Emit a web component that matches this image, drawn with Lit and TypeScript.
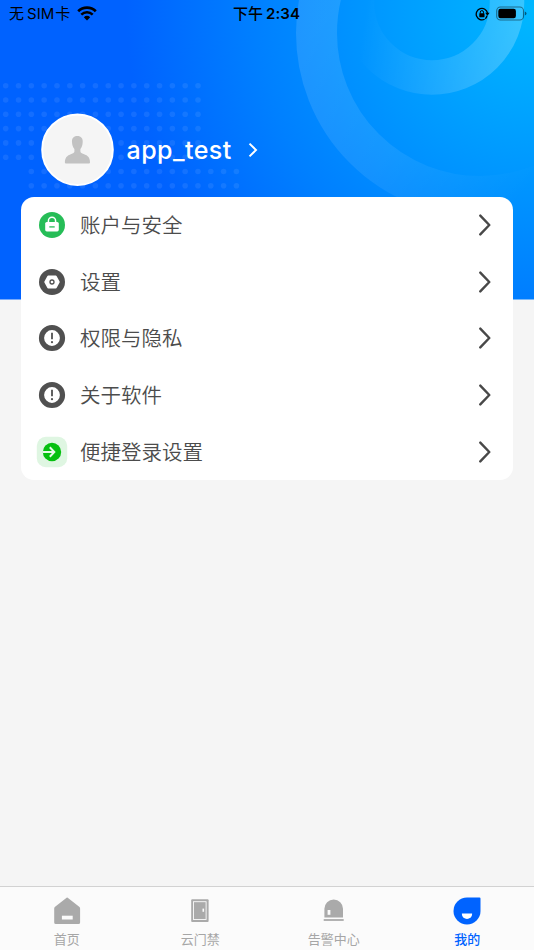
import { LitElement, html, svg, css } from "lit";
import { customElement } from "lit/decorators.js";

const dotRows = [
  ...[0, 1, 2, 3, 4, 5].map((r) => ({ x: 5.7, y: 85.7 + r * 14.3, n: 16 })),
  ...[6, 7].map((r) => ({ x: 31.3, y: 85.7 + r * 14.3, n: 17 })),
];

const exclaim = svg`<circle cx="16" cy="16" r="10.5" fill="#fff" stroke="#505050" stroke-width="5.2"/>
  <path d="M16 10.8v6.4" stroke="#505050" stroke-width="1.8"/><circle cx="16" cy="20.2" r="1.1" fill="#505050"/>`;

const rows = [
  {
    label: "账户与安全",
    icon: svg`<circle cx="16" cy="16" r="13" fill="#26bd57"/>
      <path d="M12.4 13.500v-1.600a3.600 3.600 0 0 1 7.200 0v1.600" fill="none" stroke="#fff" stroke-width="1.500"/>
      <rect x="9.2" y="13" width="13.6" height="9.4" rx="1.6" fill="#fff"/>
      <path d="M13.300 17.900h5.400" stroke="#26bd57" stroke-width="1.300"/>`,
  },
  {
    label: "设置",
    icon: svg`<circle cx="16" cy="16" r="13" fill="#505050"/>
      <path d="M12.2 10.4h7.6L22.800 16l-3 5.600h-7.600L9.200 16z" fill="#fff" stroke="#fff" stroke-width="1.8" stroke-linejoin="round"/>
      <circle cx="16" cy="16" r="2" fill="none" stroke="#505050" stroke-width="1.3"/>`,
  },
  { label: "权限与隐私", icon: exclaim },
  { label: "关于软件", icon: exclaim },
  {
    label: "便捷登录设置",
    icon: svg`<rect x="0.8" y="0.8" width="30.4" height="30.4" rx="9" fill="#dff6e2"/>
      <circle cx="16" cy="16" r="9.2" fill="#06c010"/>
      <path d="M6.800 16h11M13.800 11.200l4.500 4.800-4.500 4.800" fill="none" stroke="#e8fae9" stroke-width="2"/>`,
  },
];

const tabs = [
  {
    label: "首页",
    icon: svg`<path d="M15.700 1.800 27.200 10.800q.9.700.9 1.800V26.500q0 1.600-1.600 1.600H3.800q-1.600 0-1.600-1.600V12.600q0-1.100.9-1.800L14.600 1.800q.550-.4 1.100 0z" fill="#aaa"/>
      <rect x="9.900" y="19.700" width="10.800" height="3.800" fill="#fbfbfb"/>`,
  },
  {
    label: "云门禁",
    icon: svg`<rect x="6.200" y="3.200" width="17.400" height="22.800" rx="1" fill="#aaa"/>
      <rect x="8.500" y="5.700" width="12.600" height="17.800" fill="none" stroke="#fbfbfb" stroke-width="0.900"/>
      <rect x="17.500" y="12.600" width="1.600" height="3.200" fill="#fbfbfb"/>`,
  },
  {
    label: "告警中心",
    icon: svg`<path d="M5.400 21.400V12.800a9.300 9.300 0 0 1 18.600 0v8.600z" fill="#aaa"/>
      <path d="M4.700 24h20" stroke="#aaa" stroke-width="1.800"/>
      <rect x="8.600" y="14" width="2.800" height="4.800" fill="#fbfbfb"/>`,
  },
  {
    label: "我的",
    active: true,
    icon: svg`<path d="M15 1.500H27.500q1 0 1 1V15a13.500 13.500 0 1 1-13.500-13.500z" fill="#0063ff"/>
      <path d="M9.900 17.600h10.200v.4a5.100 4.900 0 0 1-10.200 0z" fill="#fff"/>`,
  },
];

@customElement("app-root")
export class AppRoot extends LitElement {
  static styles = css`
    :host {
      display: flex;
      flex-direction: column;
      position: relative;
      height: 950px;
      background: #f5f5f5;
      font-family: "Inter", "Noto Sans CJK SC", sans-serif;
      overflow: hidden;
    }
    svg { display: block; flex: none; }
    .backdrop { position: absolute; top: 0; left: 0; }
    .status, .profile, .card, .tabs { position: relative; }
    .status {
      height: 28px;
      display: grid;
      grid-template-columns: 1fr auto 1fr;
      align-items: center;
      padding: 0 7px 0 9px;
      box-sizing: border-box;
      font-size: 15px;
      line-height: 28px;
      color: #000;
      white-space: nowrap;
    }
    .carrier { display: flex; align-items: center; gap: 2px; }
    .carrier span:nth-child(2) { margin: 0 -1px 0 1px; }
    .carrier svg { margin: -2px 0 0 5px; }
    .clock { display: flex; gap: 3px; font-weight: 500; margin-right: 3px; }
    .clock b { font-weight: 600; letter-spacing: 0.1px; }
    .power { display: flex; align-items: center; justify-content: flex-end; gap: 6px; }
    .power svg:last-child { margin-top: -2px; }
    .profile {
      height: 73px;
      margin-top: 85px;
      padding-left: 41px;
      display: flex;
      align-items: center;
    }
    .name {
      margin-left: 12.500px;
      width: 105px;
      font-size: 25px;
      line-height: 32px;
      font-weight: 500;
      letter-spacing: 0.450px;
      color: #fff;
      white-space: nowrap;
      padding-top: 1px;
    }
    .more { margin-left: 16.500px; }
    .card {
      margin: 10.500px 21px 0;
      height: 283.500px;
      border-radius: 13px;
      background: #fff;
    }
    .row {
      height: 56.750px;
      display: flex;
      align-items: center;
      padding: 0 21px 0 15px;
    }
    .label {
      flex: 1;
      margin: 0 0 2px 12px;
      font-family: "Noto Sans CJK SC", sans-serif;
      font-weight: 350;
      font-size: 20.500px;
      line-height: 30px;
      color: #4c4c4c;
    }
    .tabs {
      margin-top: auto;
      height: 64px;
      box-sizing: border-box;
      border-top: 1px solid #d2d2d2;
      background: #fbfbfb;
      display: grid;
      grid-template-columns: repeat(4, 1fr);
    }
    .tab {
      display: flex;
      flex-direction: column;
      align-items: center;
      padding-top: 9px;
      font-size: 13px;
      line-height: 18px;
      color: #a6a6a6;
      font-family: "Noto Sans CJK SC", sans-serif;
    }
    .tab span { margin-top: 4px; }
    .active { color: #0063ff; font-weight: 500; }
  `;

  render() {
    return html`
      <svg class="backdrop" width="534" height="300" viewBox="0 0 534 300">
        <defs>
          <radialGradient id="sky" gradientUnits="userSpaceOnUse" cx="534" cy="10" r="408">
            <stop offset="0" stop-color="#00b8ff" />
            <stop offset="0.68" stop-color="#0080ff" />
            <stop offset="1" stop-color="#0062ff" />
          </radialGradient>
          <linearGradient id="big" gradientUnits="userSpaceOnUse" x1="310" y1="40" x2="510" y2="210">
            <stop offset="0" stop-color="#fff" stop-opacity="0.12" />
            <stop offset="0.5" stop-color="#fff" stop-opacity="0.08" />
            <stop offset="1" stop-color="#fff" stop-opacity="0" />
          </linearGradient>
          <linearGradient id="small" gradientUnits="userSpaceOnUse" x1="350" y1="20" x2="520" y2="45">
            <stop offset="0" stop-color="#fff" stop-opacity="0" />
            <stop offset="0.080" stop-color="#fff" stop-opacity="0" />
            <stop offset="1" stop-color="#fff" stop-opacity="0.22" />
          </linearGradient>
        </defs>
        <rect width="534" height="299.500" fill="url(#sky)" />
        <circle cx="480" cy="33" r="163.500" fill="none" stroke="url(#big)" stroke-width="41" />
        <circle cx="432" cy="2.500" r="75" fill="none" stroke="url(#small)" stroke-width="34.500" />
        ${dotRows.map((d) =>
          Array.from({ length: d.n }, (_, i) =>
            svg`<circle cx=${d.x + i * 12.82} cy=${d.y} r="2.800" fill="#fff" fill-opacity="0.08"/>`
          )
        )}
      </svg>

      <div class="status">
        <div class="carrier">
          <span>无</span><span>SIM</span><span>卡</span>
          <svg width="20" height="15" viewBox="0 0 20 15" fill="none" stroke="#000">
            <path d="M1.200 5.300a12.600 12.600 0 0 1 17.600 0" stroke-width="2.700" />
            <path d="M4.300 8.600a8.200 8.200 0 0 1 11.400 0" stroke-width="2.500" />
            <path d="M10 14.600 6.800 11.300a4.700 4.700 0 0 1 6.400 0z" fill="#000" stroke="none" />
          </svg>
        </div>
        <div class="clock"><span>下午</span><b>2:34</b></div>
        <div class="power">
          <svg width="15" height="14" viewBox="0 0 15 14">
            <path d="M9.600 12.200A5.700 5.700 0 1 1 12.500 6" fill="none" stroke="#000" stroke-width="1.300" />
            <path d="M12 8.600A5.700 5.700 0 0 1 10.300 11.700" fill="none" stroke="#000" stroke-width="1.300" />
            <path d="M10.200 5.700h4.400L12.400 8.800z" />
            <rect x="4.300" y="6.200" width="5.200" height="4" rx="0.600" />
            <path d="M5.300 6.600V5.200a1.600 1.600 0 0 1 3.200 0v1.400" fill="none" stroke="#000" stroke-width="1" />
          </svg>
          <svg width="31" height="15" viewBox="0 0 31 15">
            <rect x="0.700" y="1" width="26.800" height="13" rx="3.800" fill="none" stroke="#000" stroke-opacity="0.45" stroke-width="1.100" />
            <rect x="2.300" y="2.700" width="17.600" height="9.600" rx="2.200" />
            <path d="M28.800 5.500q1.700.6 1.700 2t-1.700 2z" fill-opacity="0.5" />
          </svg>
        </div>
      </div>

      <div class="profile">
        <svg width="73" height="73" viewBox="0 0 73 73">
          <circle cx="36.500" cy="36.700" r="35.300" fill="#f5f5f5" stroke="#fff" stroke-width="2" />
          <path
            d="M36.300 23c3.800 0 5.600 2.500 5.400 6-.1 3.200-.9 5.300-2.300 7v2.500c0 1.200 1.500 1.800 3.200 2.400 4.600 1.600 6.400 3.800 6.400 8.500q0 1.100-1 1.100H24.900q-1 0-1-1.100c0-4.700 2-6.900 6.400-8.500 1.700-.6 3.100-1.200 3.100-2.400V36c-1.400-1.700-2.300-3.800-2.400-7-.2-3.500 1.500-6 5.300-6z"
            fill="#c2c2c2"
          />
        </svg>
        <div class="name">app_test</div>
        <svg class="more" width="10" height="16" viewBox="0 0 10 16">
          <path d="M1.500 1.600 8 8l-6.500 6.400" fill="none" stroke="#fff" stroke-width="2" />
        </svg>
      </div>

      <div class="card">
        ${rows.map(
          (r) => html`<div class="row">
            <svg width="32" height="32" viewBox="0 0 32 32">${r.icon}</svg>
            <span class="label">${r.label}</span>
            <svg width="14" height="22" viewBox="0 0 14 22">
              <path d="M2.300 1.600 11.300 11l-9 9.400" fill="none" stroke="#484848" stroke-width="2.400" stroke-linecap="round" stroke-linejoin="round" />
            </svg>
          </div>`
        )}
      </div>

      <div class="tabs">
        ${tabs.map(
          (t) => html`<div class="tab ${t.active ? "active" : ""}">
            <svg width="30" height="30" viewBox="0 0 30 30">${t.icon}</svg>
            <span>${t.label}</span>
          </div>`
        )}
      </div>
    `;
  }
}
